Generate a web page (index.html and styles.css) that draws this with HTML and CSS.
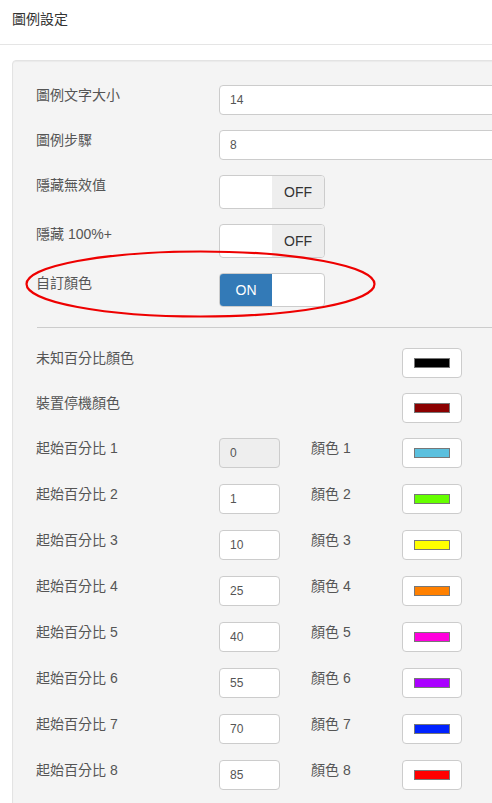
FILE: index.html
```html
<!DOCTYPE html>
<html lang="zh-Hant">
<head>
<meta charset="utf-8">
<title>圖例設定</title>
<link rel="stylesheet" href="styles.css">
</head>
<body>
<div class="header">圖例設定</div>
<div class="well">
  <div class="row"><div class="label">圖例文字大小</div><input class="text wide" value="14"></div>
  <div class="row"><div class="label">圖例步驟</div><input class="text wide" value="8"></div>
  <div class="row trow"><div class="label">隱藏無效值</div><div class="toggle"><span class="blank"></span><span class="off">OFF</span></div></div>
  <div class="row trow"><div class="label">隱藏 100%+</div><div class="toggle"><span class="blank"></span><span class="off">OFF</span></div></div>
  <div class="row trow"><div class="label">自訂顏色</div><div class="toggle"><span class="on">ON</span><span class="blank"></span></div></div>
  <hr class="sep">
  <div class="crow"><div class="label">未知百分比顏色</div><span></span><span></span><button class="cbtn"><span class="sw" style="background:#000000"></span></button></div>
  <div class="crow"><div class="label">裝置停機顏色</div><span></span><span></span><button class="cbtn"><span class="sw" style="background:#8b0000"></span></button></div>
  <div class="crow tall"><div class="label">起始百分比 1</div><input class="text num" value="0" disabled><div class="label">顏色 1</div><button class="cbtn"><span class="sw" style="background:#5bc0de"></span></button></div>
  <div class="crow tall"><div class="label">起始百分比 2</div><input class="text num" value="1"><div class="label">顏色 2</div><button class="cbtn"><span class="sw" style="background:#66ff00"></span></button></div>
  <div class="crow tall"><div class="label">起始百分比 3</div><input class="text num" value="10"><div class="label">顏色 3</div><button class="cbtn"><span class="sw" style="background:#ffff00"></span></button></div>
  <div class="crow tall"><div class="label">起始百分比 4</div><input class="text num" value="25"><div class="label">顏色 4</div><button class="cbtn"><span class="sw" style="background:#ff8000"></span></button></div>
  <div class="crow tall"><div class="label">起始百分比 5</div><input class="text num" value="40"><div class="label">顏色 5</div><button class="cbtn"><span class="sw" style="background:#ff00dd"></span></button></div>
  <div class="crow tall"><div class="label">起始百分比 6</div><input class="text num" value="55"><div class="label">顏色 6</div><button class="cbtn"><span class="sw" style="background:#aa00ff"></span></button></div>
  <div class="crow tall"><div class="label">起始百分比 7</div><input class="text num" value="70"><div class="label">顏色 7</div><button class="cbtn"><span class="sw" style="background:#0022ff"></span></button></div>
  <div class="crow tall"><div class="label">起始百分比 8</div><input class="text num" value="85"><div class="label">顏色 8</div><button class="cbtn"><span class="sw" style="background:#ff0000"></span></button></div>
</div>
<svg class="mark" width="492" height="803" viewBox="0 0 492 803"><ellipse cx="200.5" cy="284" rx="174" ry="32.5" fill="none" stroke="#ee0000" stroke-width="2.2"/></svg>
</body>
</html>
```
FILE: styles.css
```css
html, body {
  margin: 0;
  padding: 0;
  overflow: hidden;
  background: #fff;
}
body {
  font-family: "Liberation Sans", "Noto Sans CJK TC", sans-serif;
  font-size: 14px;
  line-height: 20px;
  color: #555;
  position: relative;
  width: 492px;
  height: 803px;
}
.header {
  height: 45px;
  box-sizing: border-box;
  padding: 9px 12px 0;
  color: #333;
  border-bottom: 1px solid #e5e5e5;
}
.well {
  margin: 15px 0 0 12px;
  width: 560px;
  box-sizing: border-box;
  background: #f4f4f4;
  border: 1px solid #e3e3e3;
  border-radius: 4px;
  box-shadow: inset 0 1px 1px rgba(0,0,0,0.04);
  padding: 24px 23px 20px;
}
.row {
  display: flex;
  align-items: flex-start;
  margin-bottom: 15px;
}
.label {
  width: 183px;
  flex: none;
  color: #555;
}
.text {
  height: 30px;
  box-sizing: border-box;
  border: 1px solid #ccc;
  border-radius: 4px;
  background: #fff;
  padding: 0 10px;
  font-family: "Liberation Sans", sans-serif;
  font-size: 12px;
  color: #555;
  margin: 0;
  outline: none;
}
.text.wide {
  width: 320px;
}
.text.num {
  width: 61px;
}
.text:disabled {
  background: #eee;
  color: #555;
}
.toggle {
  display: flex;
  width: 106px;
  height: 34px;
  box-sizing: border-box;
  border: 1px solid #ccc;
  border-radius: 4px;
  overflow: hidden;
  background: #fff;
}
.toggle span {
  flex: 1;
  display: flex;
  align-items: center;
  justify-content: center;
  font-size: 14px;
}
.toggle .off {
  background: #eee;
  color: #333;
}
.toggle .on {
  background: #337ab7;
  color: #fff;
}
.sep {
  border: 0;
  border-top: 1px solid #ccc;
  margin: 20px 0 20px 1px;
  height: 0;
}
.crow {
  display: grid;
  grid-template-columns: 183px 61px 31px 91px 60px;
  align-items: start;
  margin-bottom: 15px;
}
.crow.tall {
  margin-bottom: 16px;
}
.crow .label {
  width: auto;
}
.crow .label:nth-child(3) {
  grid-column: 4;
}
.crow > .cbtn {
  grid-column: 5;
}
.crow > span:nth-child(2) { grid-column: 2; }
.crow > span:nth-child(3) { grid-column: 4; }
.cbtn {
  width: 60px;
  height: 30px;
  box-sizing: border-box;
  border: 1px solid #ccc;
  border-radius: 4px;
  background: #fff;
  padding: 0;
  margin: 0;
  display: flex;
  align-items: center;
  justify-content: center;
}
.sw {
  display: block;
  width: 36px;
  height: 10px;
  box-sizing: border-box;
  border: 1px solid #777;
}
.mark {
  position: absolute;
  left: 0;
  top: 0;
  pointer-events: none;
}
```
